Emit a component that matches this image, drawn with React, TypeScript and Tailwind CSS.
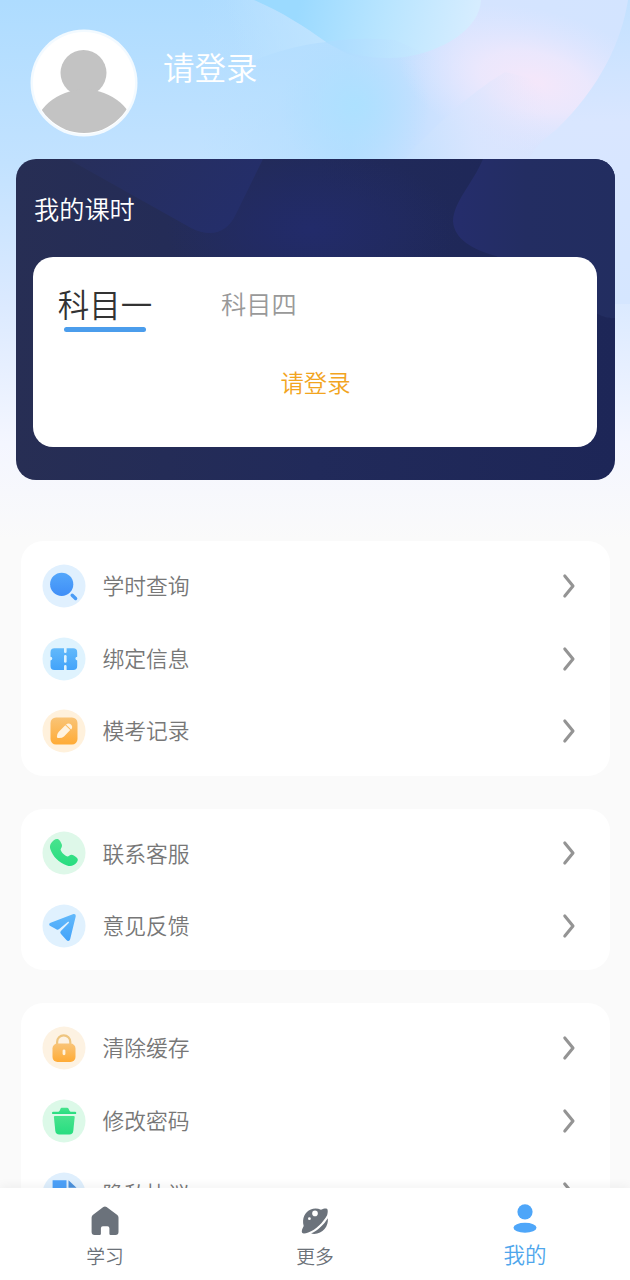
import { useState } from "react";
import type { ReactNode } from "react";

type MenuItem = {
  label: string;
  icon: ReactNode;
};

const SearchIcon = () => (
  <svg viewBox="0 0 44 44" className="h-11 w-11">
    <circle cx="22" cy="22" r="21.5" fill="#e0f0fe" />
    <circle cx="19.7" cy="20.3" r="11.6" fill="url(#blue)" />
    <path
      d="M30.2 31.2l3.4 3.3"
      stroke="#4a9cf6"
      strokeWidth="3.4"
      strokeLinecap="round"
    />
  </svg>
);

const TicketIcon = () => (
  <svg viewBox="0 0 44 44" className="h-11 w-11">
    <circle cx="22" cy="22" r="21.5" fill="#dff3fe" />
    <path
      d="M12.500 11.300H22v3.500a1.300 1.300 0 0 0 2.600 0v-3.500h6.600a4 4 0 0 1 4 4v4.500a1.800 1.800 0 0 0 0 3.600v5.500a4 4 0 0 1-4 4h-6.600v-3.500a1.300 1.300 0 0 0-2.600 0v3.500h-9.500a4 4 0 0 1-4-4v-5.500a1.800 1.800 0 0 0 0-3.600v-4.500a4 4 0 0 1 4-4z"
      fill="url(#sky)"
    />
    <path
      d="M23.300 19.300v5.200"
      stroke="#dff3fe"
      strokeWidth="2.600"
      strokeLinecap="round"
    />
  </svg>
);

const PencilIcon = () => (
  <svg viewBox="0 0 44 44" className="h-11 w-11">
    <circle cx="22" cy="22" r="21.5" fill="#fff1dc" />
    <rect x="8.5" y="8.500" width="27" height="27" rx="5.500" fill="url(#orange)" />
    <path
      d="M23.300 16.300l4.900 4.600-6.200 6.600q-1.700 1.700-5.700 1.600-1.500 0-1.400-1.400.1-3.100 1.700-4.800z"
      fill="#fff3df"
    />
    <path
      d="M24 15.600q2.600-2.300 5 0 2.300 2.400.1 4.900z"
      fill="#fff3df"
    />
  </svg>
);

const PhoneIcon = () => (
  <svg viewBox="0 0 44 44" className="h-11 w-11">
    <circle cx="22" cy="22" r="21.5" fill="#def8e9" />
    <path
      d="M11.800 9.300c2.300-1.800 4.800-1.700 6.300.8l1.300 2.500c1 1.900.7 3.300-.4 4.900-.7 1-.3 1.800.4 2.900 1.300 2 2.700 3.300 4.700 4.500 1.100.6 2 .7 3-.1 1.500-1.200 3-1.300 4.700-.3l2.200 1.500c2.200 1.500 2.400 3.500.7 5.500-2.400 2.900-5.800 4.300-9.700 2.900C16.700 31.400 11 25.700 8.400 18.200c-1.200-3.600.4-6.400 3.400-8.900z"
      fill="url(#green)"
    />
  </svg>
);

const PlaneIcon = () => (
  <svg viewBox="0 0 44 44" className="h-11 w-11">
    <circle cx="22" cy="22" r="21.5" fill="#e0f1fe" />
    <path
      d="M8.600 18.700L30.800 10.300c2-.7 3.100.2 2.900 2.100l-5.500 22.700c-.5 2.100-2.400 2.600-3.800.9l-5.600-6.300a1.900 1.900 0 0 1 .1-2.600l7.800-8.100c.7-.9-.1-1.600-1-.9l-8.800 7.200c-.9.7-1.800.6-2.600-.1L7.900 21.800c-1.200-1.200-.8-2.500.7-3.100z"
      fill="url(#sky)"
    />
  </svg>
);

const LockIcon = () => (
  <svg viewBox="0 0 44 44" className="h-11 w-11">
    <circle cx="22" cy="22" r="21.5" fill="#fdf2e2" />
    <path
      d="M15.100 20v-4.100a6.600 6.600 0 0 1 13.200 0V20"
      fill="none"
      stroke="#eec57f"
      strokeWidth="2.2"
    />
    <rect x="10.500" y="17.600" width="23" height="18.400" rx="5" fill="url(#orange)" />
    <path
      d="M22 24.800v3"
      stroke="#fff3df"
      strokeWidth="2.8"
      strokeLinecap="round"
    />
  </svg>
);

const TrashIcon = () => (
  <svg viewBox="0 0 44 44" className="h-11 w-11">
    <circle cx="22" cy="22" r="21.5" fill="#dcf9e8" />
    <path
      d="M11.300 12.700h5.200c1.200-.4 1.400-1.500 2-2.900.3-.7.700-1 1.500-1h5c.8 0 1.300.3 1.600 1 .6 1.400.9 2.500 2 2.900H33q1.300 0 1.300 1.200 0 1.200-1.300 1.200H11.300q-1.300 0-1.300-1.200 0-1.200 1.300-1.200z"
      fill="url(#green)"
    />
    <path
      d="M13 16.900h18.600q1.200 0 1.100 1.200l-1.400 13.600c-.3 2.600-1.400 3.700-4 3.700h-9.900c-2.600 0-3.800-1.100-4.100-3.700L11.900 18.100q-.1-1.200 1.100-1.200z"
      fill="url(#green)"
    />
  </svg>
);

const DocIcon = () => (
  <svg viewBox="0 0 44 44" className="h-11 w-11">
    <circle cx="22" cy="22" r="21.5" fill="#dfeffd" />
    <path d="M10.600 8.300h13.900v9.400h10v17.500H10.600z" fill="#4ba0f8" />
    <path d="M26.500 8.300l8 7.500h-8z" fill="#4b91dd" />
  </svg>
);

const HomeIcon = () => (
  <svg viewBox="0 0 28 30" className="h-[30px] w-7">
    <path
      d="M12.300 1.100a2.600 2.600 0 0 1 3.300 0l10.400 7.700q1.500 1.100 1.500 2.800v14.300q0 3-3 3h-4.900q-1.200 0-1.200-1.200v-5.500q0-2-2-2h-4.500q-2 0-2 2v5.500q0 1.200-1.200 1.200H3.600q-3 0-3-3V11.600q0-1.700 1.500-2.800z"
      fill="#6b727b"
    />
  </svg>
);

const PlanetIcon = () => (
  <svg viewBox="0 0 28 30" className="h-[30px] w-7">
    <path
      d="M20 3.700c2.400-1.100 4.600-1.400 5.800-1 1.200.5 1.200 3.600.3 6.600C22 16.500 15 23.800 7.200 26.500c-2.600.9-5.200 1.300-6.100.3-.9-1.200.2-4.400 1.600-6.800C.6 12.500 4 5.800 9.800 3.500c3.200-1.300 6.800-1.200 10.200.2z"
      fill="#6b727b"
    />
    <path
      d="M26.800 12.300c1.100 8.900-6.500 17.300-16.700 15.300 6.900-3.200 12.800-8.900 16.700-15.300z"
      fill="#6b727b"
    />
    <circle cx="14" cy="7.400" r="2.800" fill="#fff" />
    <circle cx="8.400" cy="12.700" r="1.400" fill="#fff" />
  </svg>
);

const UserIcon = () => (
  <svg viewBox="0 0 28 30" className="h-[30px] w-7">
    <circle cx="14" cy="8.800" r="7.600" fill="#4ea6f9" />
    <ellipse cx="14" cy="24.800" rx="11.500" ry="5" fill="#4ea6f9" />
  </svg>
);

const ArrowIcon = () => (
  <svg viewBox="0 0 14 26" className="h-[26px] w-3.5" fill="none">
    <path
      d="M2.800 3l8.200 10-8.200 10"
      stroke="#949494"
      strokeWidth="3.100"
      strokeLinecap="round"
      strokeLinejoin="round"
    />
  </svg>
);

const Gradients = () => (
  <svg className="absolute h-0 w-0">
    <defs>
      <linearGradient id="blue" x1="0" y1="0" x2="0" y2="1">
        <stop offset="0" stopColor="#54a7fb" />
        <stop offset="1" stopColor="#3f8ef7" />
      </linearGradient>
      <linearGradient id="sky" x1="0" y1="0" x2="0" y2="1">
        <stop offset="0" stopColor="#62b9fb" />
        <stop offset="1" stopColor="#43a3fa" />
      </linearGradient>
      <linearGradient id="orange" x1="0" y1="0" x2="0" y2="1">
        <stop offset="0" stopColor="#f9c477" />
        <stop offset="1" stopColor="#ffab35" />
      </linearGradient>
      <linearGradient id="green" x1="0" y1="0" x2="0" y2="1">
        <stop offset="0" stopColor="#48e38d" />
        <stop offset="1" stopColor="#27dd80" />
      </linearGradient>
    </defs>
  </svg>
);

const Backdrop = () => (
  <svg
    viewBox="0 0 630 540"
    className="absolute top-0 left-0 h-[540px] w-[630px]"
  >
    <defs>
      <linearGradient id="sheet" x1="0" y1="0" x2="0" y2="1">
        <stop offset="0" stopColor="#aedcff" />
        <stop offset="0.3" stopColor="#c2e2ff" />
        <stop offset="0.55" stopColor="#dae9ff" />
        <stop offset="0.82" stopColor="#f4f6ff" />
        <stop offset="1" stopColor="#fafafa" />
      </linearGradient>
      <linearGradient
        id="wing"
        gradientUnits="userSpaceOnUse"
        x1="200"
        y1="0"
        x2="630"
        y2="0"
      >
        <stop offset="0" stopColor="#b8e0ff" stopOpacity="0" />
        <stop offset="0.35" stopColor="#b5deff" />
        <stop offset="0.5" stopColor="#c6e0ff" />
        <stop offset="0.62" stopColor="#d5e4ff" />
        <stop offset="1" stopColor="#d3e4ff" />
      </linearGradient>
      <linearGradient
        id="petal"
        gradientUnits="userSpaceOnUse"
        x1="300"
        y1="0"
        x2="470"
        y2="40"
      >
        <stop offset="0" stopColor="#9bdaff" />
        <stop offset="0.5" stopColor="#b9e5ff" />
        <stop offset="1" stopColor="#d6edff" />
      </linearGradient>
      <linearGradient
        id="tip"
        gradientUnits="userSpaceOnUse"
        x1="235"
        y1="50"
        x2="330"
        y2="30"
      >
        <stop offset="0" stopColor="#bfe4ff" stopOpacity="0" />
        <stop offset="1" stopColor="#c0e4ff" />
      </linearGradient>
      <linearGradient
        id="under"
        gradientUnits="userSpaceOnUse"
        x1="340"
        y1="0"
        x2="440"
        y2="0"
      >
        <stop offset="0" stopColor="#aedcff" stopOpacity="0.75" />
        <stop offset="1" stopColor="#c8e3ff" stopOpacity="0" />
      </linearGradient>
      <linearGradient id="side" x1="0" y1="0" x2="0" y2="1">
        <stop offset="0" stopColor="#c3e1ff" />
        <stop offset="0.4" stopColor="#d9e6ff" />
        <stop offset="1" stopColor="#d5e6ff" />
      </linearGradient>
      <radialGradient id="pink">
        <stop offset="0" stopColor="#f5e7fa" />
        <stop offset="0.4" stopColor="#efe8fc" stopOpacity="0.85" />
        <stop offset="1" stopColor="#e2e6ff" stopOpacity="0" />
      </radialGradient>
      <radialGradient id="cyan">
        <stop offset="0" stopColor="#ade1ff" />
        <stop offset="1" stopColor="#b0deff" stopOpacity="0" />
      </radialGradient>
      <linearGradient
        id="fold"
        gradientUnits="userSpaceOnUse"
        x1="410"
        y1="150"
        x2="550"
        y2="110"
      >
        <stop offset="0" stopColor="#c6e1fe" />
        <stop offset="0.45" stopColor="#d9e5fe" />
        <stop offset="1" stopColor="#e9e6fb" stopOpacity="0" />
      </linearGradient>
      <clipPath id="wingClip">
        <path d="M200 0H628C622 40 600 88 556 130C540 142 532 150 524 170H200z" />
      </clipPath>
    </defs>
    <rect width="630" height="540" fill="url(#sheet)" />
    <path d="M500 0H630V304H500z" fill="url(#side)" />
    <g clipPath="url(#wingClip)">
      <rect x="200" width="430" height="170" fill="url(#wing)" />
      <circle cx="355" cy="105" r="75" fill="url(#cyan)" />
      <ellipse
        cx="535"
        cy="82"
        rx="140"
        ry="72"
        fill="url(#pink)"
        transform="rotate(14 535 82)"
      />
      <path
        d="M405 159C432 128 466 96 505 72L580 90V170H405z"
        fill="url(#fold)"
        opacity="0.8"
      />
    </g>
    <path
      d="M254 0H481C480 30 440 52 405 57C380 60 350 57 326 42C305 27 282 12 254 0z"
      fill="url(#petal)"
    />
    <path
      d="M326 42C350 38 372 38 395 40L440 60H370C350 57 340 50 326 42z"
      fill="url(#under)"
    />
    <path
      d="M254 0C282 12 305 27 326 42C305 44 280 50 255 60L220 60V0z"
      fill="url(#tip)"
    />
  </svg>
);

const CardPattern = () => (
  <svg
    viewBox="0 0 599 321"
    className="absolute top-0 left-0 h-full w-full"
    preserveAspectRatio="none"
  >
    <defs>
      <linearGradient id="navy" x1="0" y1="0" x2="1" y2="0">
        <stop offset="0" stopColor="#272e54" />
        <stop offset="0.5" stopColor="#212a5a" />
        <stop offset="1" stopColor="#1d2657" />
      </linearGradient>
      <linearGradient id="drop" x1="0" y1="0" x2="1" y2="0.3">
        <stop offset="0" stopColor="#272f5b" />
        <stop offset="1" stopColor="#242e6a" />
      </linearGradient>
      <linearGradient id="blob" x1="0" y1="0" x2="1" y2="0">
        <stop offset="0" stopColor="#252d6c" />
        <stop offset="0.45" stopColor="#232d62" />
        <stop offset="1" stopColor="#222d60" />
      </linearGradient>
      <radialGradient id="glow">
        <stop offset="0" stopColor="#222b6a" />
        <stop offset="1" stopColor="#222b6a" stopOpacity="0" />
      </radialGradient>
    </defs>
    <rect width="599" height="321" fill="url(#navy)" />
    <ellipse cx="295" cy="70" rx="145" ry="80" fill="url(#glow)" />
    <path d="M52 0H247L220 55C210 76 193 78 175 69z" fill="url(#drop)" />
    <path
      d="M467 0C456 26 438 42 437 62C438 80 457 91 480 97L560 140C580 156 590 160 599 159V0z"
      fill="url(#blob)"
    />
  </svg>
);

const menuGroups: MenuItem[][] = [
  [
    { label: "学时查询", icon: <SearchIcon /> },
    { label: "绑定信息", icon: <TicketIcon /> },
    { label: "模考记录", icon: <PencilIcon /> },
  ],
  [
    { label: "联系客服", icon: <PhoneIcon /> },
    { label: "意见反馈", icon: <PlaneIcon /> },
  ],
  [
    { label: "清除缓存", icon: <LockIcon /> },
    { label: "修改密码", icon: <TrashIcon /> },
    { label: "隐私协议", icon: <DocIcon /> },
  ],
];

const App = () => {
  const [subject, setSubject] = useState("科目一");

  return (
    <div className="relative flex h-[1280px] w-[630px] flex-col overflow-hidden bg-[#fafafa] font-['Noto_Sans_CJK_SC',sans-serif] font-[350]">
      <Gradients />
      <Backdrop />
      <main className="relative flex min-h-0 flex-1 flex-col overflow-hidden">
        <header className="flex h-[159px] shrink-0 items-start pt-[29px] pl-[30px]">
          <svg viewBox="0 0 108 108" className="h-[108px] w-[108px]">
            <defs>
              <clipPath id="avatar">
                <circle cx="54" cy="54" r="50" />
              </clipPath>
            </defs>
            <circle cx="54" cy="54" r="53.5" fill="#f3faff" />
            <circle cx="54" cy="54" r="51" fill="#fff" />
            <g clipPath="url(#avatar)" fill="#c3c3c3">
              <circle cx="53.500" cy="44" r="23" />
              <ellipse cx="54.500" cy="106" rx="51" ry="45.500" />
            </g>
          </svg>
          <button className="mt-3.5 ml-[25px] text-[31.5px] leading-[46px] text-white">
            请登录
          </button>
        </header>

        <section className="relative mr-[15px] ml-4 h-[321px] shrink-0 overflow-hidden rounded-[20px]">
          <CardPattern />
          <div className="relative px-[17px] pt-[31px]">
            <h2 className="pl-px text-[25.2px] leading-9 text-white">
              我的课时
            </h2>
            <div className="mr-px mt-[31px] flex h-[190px] flex-col rounded-[20px] bg-white px-6 pt-6">
              <div className="flex items-start">
                <button
                  onClick={() => setSubject("科目一")}
                  className="flex w-24 flex-col items-center text-[31.5px] leading-[45px] text-[#333]"
                >
                  科目一
                  <span
                    className={`mt-px h-[5px] w-[82px] rounded-full ${
                      subject === "科目一" ? "bg-[#4b9dec]" : "bg-transparent"
                    }`}
                  ></span>
                </button>
                <button
                  onClick={() => setSubject("科目四")}
                  className="ml-[68px] text-[25.2px] leading-[45px] text-[#999]"
                >
                  科目四
                </button>
              </div>
              <div className="mt-8 pl-px text-center text-[23.4px] leading-9 text-[#f2a51f]">
                请登录
              </div>
            </div>
          </div>
        </section>

        <div className="mt-[61px] flex flex-col gap-[33px] pr-5 pl-[21px]">
          {menuGroups.map((group, index) => (
            <ul
              key={index}
              className="rounded-[22px] bg-white pt-[8.5px] pb-2"
            >
              {group.map((item) => (
                <li
                  key={item.label}
                  className="flex h-[72.7px] items-center pr-[34px] pl-[21.4px]"
                >
                  {item.icon}
                  <span className="ml-4 flex-1 pb-px text-[21.8px] text-[#777]">
                    {item.label}
                  </span>
                  <ArrowIcon />
                </li>
              ))}
            </ul>
          ))}
        </div>
      </main>

      <nav className="relative flex h-[92px] shrink-0 bg-white shadow-[0_-2px_10px_rgba(0,0,0,0.05)]">
        <a className="flex flex-1 flex-col items-center pt-[18px] text-[18.8px] leading-[30px] text-[#6b7178]">
          <HomeIcon />
          <span className="mt-[5px]">学习</span>
        </a>
        <a className="flex flex-1 flex-col items-center pt-[18px] text-[18.8px] leading-[30px] text-[#6b7178]">
          <PlanetIcon />
          <span className="mt-[5px]">更多</span>
        </a>
        <a className="flex flex-1 flex-col items-center pt-[15px] text-[21.5px] leading-[30px] text-[#4ea6ec]">
          <UserIcon />
          <span className="mt-1.5">我的</span>
        </a>
      </nav>
    </div>
  );
};

export default App;
